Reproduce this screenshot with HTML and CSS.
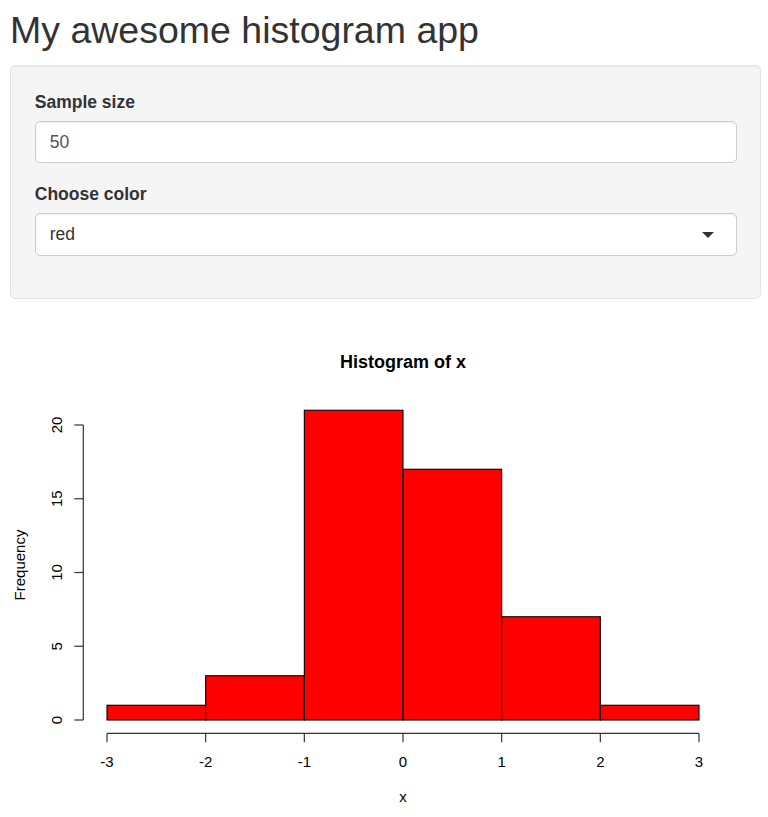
FILE: index.html
```html
<!DOCTYPE html>
<html lang="en">
<head>
<meta charset="utf-8">
<title>My awesome histogram app</title>
<link rel="stylesheet" href="styles.css">
</head>
<body>
<div class="page">
  <h2 class="title">My awesome histogram app</h2>
  <div class="well">
    <div class="form-group">
      <label class="control-label" for="n">Sample size</label>
      <input id="n" class="form-control" type="number" value="50">
    </div>
    <div class="form-group">
      <label class="control-label">Choose color</label>
      <div class="select-control">
        <span class="select-value">red</span>
        <span class="caret"></span>
      </div>
    </div>
  </div>
  <div class="plot">
    <svg class="plot-svg" width="751" height="500" viewBox="0 0 751 500" xmlns="http://www.w3.org/2000/svg">
      <text class="main" x="393" y="44" text-anchor="middle">Histogram of x</text>
      <g class="bars">
        <rect x="97" y="381.25" width="98.67" height="14.75"/>
        <rect x="195.67" y="351.75" width="98.66" height="44.25"/>
        <rect x="294.33" y="86.25" width="98.67" height="309.75"/>
        <rect x="393" y="145.25" width="98.67" height="250.75"/>
        <rect x="491.67" y="292.75" width="98.66" height="103.25"/>
        <rect x="590.33" y="381.25" width="98.67" height="14.75"/>
      </g>
      <g class="axis">
        <line x1="97" y1="409.3" x2="689" y2="409.3"/>
        <line x1="97" y1="409.3" x2="97" y2="418.3"/>
        <line x1="195.67" y1="409.3" x2="195.67" y2="418.3"/>
        <line x1="294.33" y1="409.3" x2="294.33" y2="418.3"/>
        <line x1="393" y1="409.3" x2="393" y2="418.3"/>
        <line x1="491.67" y1="409.3" x2="491.67" y2="418.3"/>
        <line x1="590.33" y1="409.3" x2="590.33" y2="418.3"/>
        <line x1="689" y1="409.3" x2="689" y2="418.3"/>
        <line x1="73.3" y1="101" x2="73.3" y2="396"/>
        <line x1="64.3" y1="396" x2="73.3" y2="396"/>
        <line x1="64.3" y1="322.25" x2="73.3" y2="322.25"/>
        <line x1="64.3" y1="248.5" x2="73.3" y2="248.5"/>
        <line x1="64.3" y1="174.75" x2="73.3" y2="174.75"/>
        <line x1="64.3" y1="101" x2="73.3" y2="101"/>
      </g>
      <g class="ticklab" text-anchor="middle">
        <text x="97" y="442.5">-3</text>
        <text x="195.67" y="442.5">-2</text>
        <text x="294.33" y="442.5">-1</text>
        <text x="393" y="442.5">0</text>
        <text x="491.67" y="442.5">1</text>
        <text x="590.33" y="442.5">2</text>
        <text x="689" y="442.5">3</text>
        <text transform="translate(52 396) rotate(-90)">0</text>
        <text transform="translate(52 322.25) rotate(-90)">5</text>
        <text transform="translate(52 248.5) rotate(-90)">10</text>
        <text transform="translate(52 174.75) rotate(-90)">15</text>
        <text transform="translate(52 101) rotate(-90)">20</text>
        <text x="393" y="477.5">x</text>
        <text transform="translate(15 241) rotate(-90)">Frequency</text>
      </g>
    </svg>
  </div>
</div>
</body>
</html>
```

FILE: styles.css
```css
html, body {
  margin: 0;
  padding: 0;
  background: #ffffff;
}

body {
  font-family: "Liberation Sans", Arial, Helvetica, sans-serif;
  font-size: 17.5px;
  line-height: 1.42857;
  color: #333333;
  overflow: hidden;
}

.page {
  padding: 0 7px 0 10px;
}

.title {
  font-size: 37.5px;
  font-weight: normal;
  line-height: 1.1;
  margin: 10px 0 14px 0;
  color: #333333;
}

.well {
  background: #f5f5f5;
  border: 1px solid #e3e3e3;
  border-radius: 5px;
  padding: 23.75px 23px 23.75px 23.75px;
  box-shadow: inset 0 1px 1px rgba(0, 0, 0, 0.05);
  margin-bottom: 24.5px;
}

.form-group {
  margin-bottom: 18.75px;
}

.control-label {
  display: block;
  font-weight: bold;
  margin-bottom: 6.25px;
}

.form-control {
  display: block;
  box-sizing: border-box;
  width: 100%;
  height: 42px;
  margin: 0;
  padding: 7.5px 14px;
  font-family: inherit;
  font-size: 17.5px;
  color: #555555;
  background: #ffffff;
  border: 1px solid #cccccc;
  border-radius: 5px;
  box-shadow: inset 0 1px 1px rgba(0, 0, 0, 0.075);
  outline: none;
}

.select-control {
  display: flex;
  align-items: center;
  justify-content: space-between;
  box-sizing: border-box;
  height: 42.5px;
  padding: 0 22px 0 14px;
  background: #ffffff;
  border: 1px solid #cccccc;
  border-radius: 5px;
  box-shadow: inset 0 1px 1px rgba(0, 0, 0, 0.075);
  color: #333333;
}

.caret {
  width: 0;
  height: 0;
  border-left: 6px solid transparent;
  border-right: 6px solid transparent;
  border-top: 6px solid #333333;
  margin-top: 1px;
}

.plot-svg {
  display: block;
}

.main {
  font-family: "Liberation Sans", Arial, sans-serif;
  font-size: 18px;
  font-weight: bold;
  fill: #000000;
}

.bars rect {
  fill: #ff0000;
  stroke: #000000;
  stroke-width: 1.1;
}

.axis line {
  stroke: #333333;
  stroke-width: 1.2;
}

.ticklab text {
  font-family: "Liberation Sans", Arial, sans-serif;
  font-size: 15px;
  fill: #000000;
}
```
